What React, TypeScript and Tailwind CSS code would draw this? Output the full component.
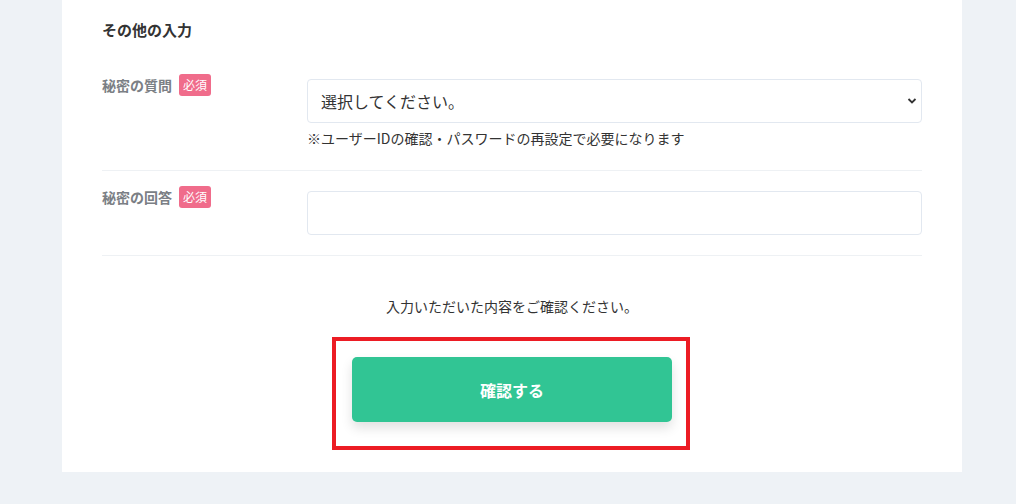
import React from "react";

function Badge() {
  return (
    <span className="ml-[7px] inline-flex h-[22px] items-center rounded-[3px] bg-[#f06c8b] px-[4px] text-[12px] font-normal leading-none text-white">
      必須
    </span>
  );
}

export default function App() {
  return (
    <div
      className="h-[504px] w-[1016px] overflow-hidden bg-[#eef2f6]"
      style={{ fontFamily: '"Noto Sans CJK JP", "Noto Sans", sans-serif' }}
    >
      <div className="ml-[62px] h-[472px] w-[900px] bg-white px-[40px]">
        <h2 className="pt-[19px] text-[15px] font-bold leading-[22px] text-[#333]">その他の入力</h2>

        <div className="mt-[38px] flex border-b border-[#eef1f4] pb-[21px]">
          <div className="w-[205px]">
            <div className="-mt-[5px] flex items-center">
              <span className="text-[14px] font-bold text-[#7b7f85]">秘密の質問</span>
              <Badge />
            </div>
          </div>
          <div className="flex-1">
            <div className="relative flex h-[44px] items-center rounded-[4px] border border-[#e2e8f0] pl-[13px] text-[16px] text-[#333]">
              選択してください。
              <svg className="absolute right-[4px] top-[17px]" width="10" height="8" viewBox="0 0 10 8">
                <path d="M1.5 2l3.5 3.5L8.5 2" fill="none" stroke="#333" strokeWidth="1.8" />
              </svg>
            </div>
            <p className="mt-[4px] text-[14px] leading-[22px] text-[#333]">※ユーザーIDの確認・パスワードの再設定で必要になります</p>
          </div>
        </div>

        <div className="flex border-b border-[#eef1f4] pt-[20px] pb-[20px]">
          <div className="w-[205px]">
            <div className="-mt-[5px] flex items-center">
              <span className="text-[14px] font-bold text-[#7b7f85]">秘密の回答</span>
              <Badge />
            </div>
          </div>
          <div className="flex-1">
            <div className="h-[44px] rounded-[4px] border border-[#e2e8f0]" />
          </div>
        </div>

        <p className="mt-[39px] text-center text-[14px] leading-[22px] text-[#333]">入力いただいた内容をご確認ください。</p>

        <div className="mt-[20px] flex justify-center">
          <div className="ml-[-2px] border-4 border-[#ec1c24] pt-[16px] pb-[24px] pl-[16px] pr-[14px]">
            <button className="flex h-[65px] w-[320px] items-center justify-center rounded-[5px] bg-[#31c594] text-[16px] font-bold text-white shadow-[0_6px_12px_rgba(0,0,0,0.12)]">
              確認する
            </button>
          </div>
        </div>
      </div>
    </div>
  );
}
